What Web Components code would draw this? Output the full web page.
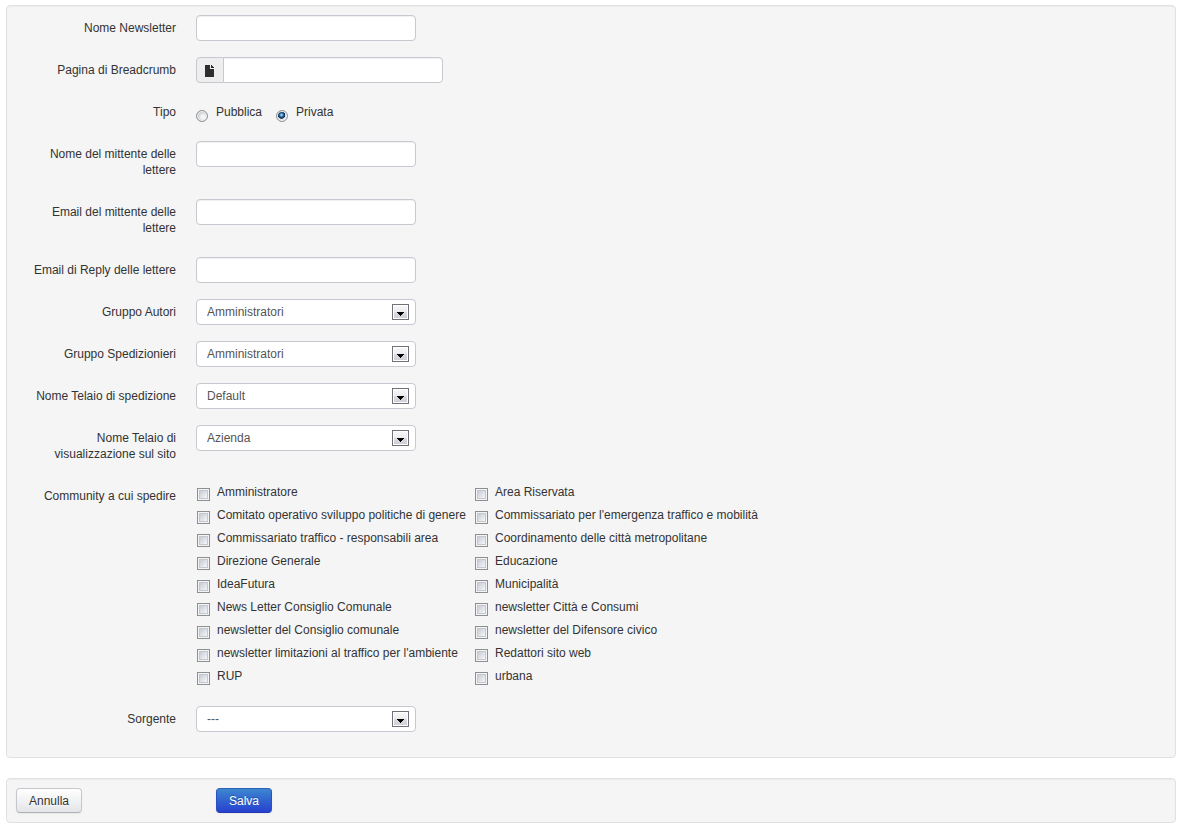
<!DOCTYPE html>
<html lang="it">
<head>
<meta charset="utf-8">
<title>Newsletter</title>
<style>
    body {
        margin: 5px 3px 5px 6px;
        background: #fff;
        color: #333;
        font: 12px/16px "Liberation Sans", Arial, sans-serif;
    }
</style>
</head>
<body>
<newsletter-form></newsletter-form>

<script>
// Row layout and label, shared by every kind of field
const rowStyle = `
    :host {
        display: flex;
        align-items: flex-start;
        gap: 20px;
        margin-bottom: 16px;
    }
    .name {
        box-sizing: border-box;
        flex: 0 0 160px;
        padding: 5px 0;
        text-align: right;
    }
    input[type="text"], select {
        box-sizing: border-box;
        width: 220px;
        height: 26px;
        margin: 0;
        padding: 4px 10px;
        border: 1px solid #c8c9d0;
        border-radius: 4px;
        background: #fff;
        color: #555;
        font: inherit;
        box-shadow: inset 0 1px 1px rgba(0, 0, 0, .06);
    }
`;

class PagePanel extends HTMLElement {
    constructor() {
        super();
        this.attachShadow({ mode: "open" });
        this.shadowRoot.innerHTML = `
            <style>
                :host {
                    display: block;
                    padding: 9px;
                    border: 1px solid #dfe1e5;
                    border-radius: 4px;
                    background: #f5f5f5;
                    box-shadow: inset 0 1px 1px rgba(0, 0, 0, .04);
                }
            </style>
            <slot></slot>
        `;
    }
}
customElements.define("page-panel", PagePanel);

class TextField extends HTMLElement {
    connectedCallback() {
        if (this.shadowRoot) return;
        this.attachShadow({ mode: "open" });
        const icon = this.hasAttribute("icon") ? `
            <span class="addon">
                <svg width="9" height="12" viewBox="0 0 9 12" aria-hidden="true">
                    <path d="M0 0h5v4h4v8H0z M6 0h1v1h1v1h1v1H6z" fill="#2e2e2e"/>
                </svg>
            </span>` : "";
        this.shadowRoot.innerHTML = `
            <style>
                ${rowStyle}
                .control { display: flex; }
                .addon {
                    box-sizing: border-box;
                    display: flex;
                    align-items: center;
                    justify-content: center;
                    width: 28px;
                    height: 26px;
                    margin-right: -1px;
                    padding: 2px 1px 0 0;
                    border: 1px solid #c8c9d0;
                    border-radius: 4px 0 0 4px;
                    background: #eeeeef;
                }
                .addon + input[type="text"] { border-radius: 0 4px 4px 0; }
            </style>
            <label class="name" for="field">${this.getAttribute("label")}</label>
            <div class="control">${icon}<input id="field" type="text"></div>
        `;
    }
}
customElements.define("text-field", TextField);

class SelectField extends HTMLElement {
    connectedCallback() {
        if (this.shadowRoot) return;
        this.attachShadow({ mode: "open" });
        this.shadowRoot.innerHTML = `
            <style>
                ${rowStyle}
                .control { position: relative; }
                select {
                    display: block;
                    appearance: none;
                    box-shadow: none;
                }
                svg {
                    position: absolute;
                    top: 5px;
                    right: 7px;
                    pointer-events: none;
                }
            </style>
            <label class="name" for="field">${this.getAttribute("label")}</label>
            <div class="control">
                <select id="field"><option>${this.getAttribute("value")}</option></select>
                <svg width="17" height="16" viewBox="0 0 17 16" aria-hidden="true">
                    <defs>
                        <linearGradient id="face" x2="0" y2="1">
                            <stop offset="0" stop-color="#f6f6f7"/>
                            <stop offset=".5" stop-color="#ececee"/>
                            <stop offset=".5" stop-color="#dcdde1"/>
                            <stop offset="1" stop-color="#cfd0d6"/>
                        </linearGradient>
                    </defs>
                    <rect x=".5" y=".5" width="16" height="15" fill="#fff" stroke="#707078"/>
                    <rect x="2" y="2" width="13" height="12" fill="url(#face)"/>
                    <path d="M5 8h7v1h-1v1h-1v1h-1v1h-1v-1h-1v-1h-1v-1h-1z" fill="#000"/>
                </svg>
            </div>
        `;
    }
}
customElements.define("select-field", SelectField);

class RadioField extends HTMLElement {
    connectedCallback() {
        if (this.shadowRoot) return;
        this.attachShadow({ mode: "open" });
        const options = this.getAttribute("options").split("|");
        const selected = this.getAttribute("value");
        this.shadowRoot.innerHTML = `
            <style>
                ${rowStyle}
                .control { display: flex; gap: 14px; padding: 5px 0; }
                .control label { display: flex; gap: 8px; height: 16px; }
                input {
                    box-sizing: border-box;
                    appearance: none;
                    width: 12px;
                    height: 12px;
                    margin: 6px 0 0;
                    border: 1px solid #8f9197;
                    border-radius: 50%;
                    background: radial-gradient(circle at 60% 60%, #f4f5f6 20%, #c9ccd1 60%);
                    box-shadow: inset 0 0 0 1px #f4f4f4;
                }
                input:checked {
                    background: radial-gradient(circle at 45% 40%, #8fd0f0 0 8%, #2c6ca4 22%, #10294f 42%, #dfe3e8 50%);
                }
            </style>
            <span class="name" id="name">${this.getAttribute("label")}</span>
            <div class="control" role="radiogroup" aria-labelledby="name">
                ${options.map(o => `<label><input type="radio" name="choice" ${o === selected ? "checked" : ""}>${o}</label>`).join("")}
            </div>
        `;
    }
}
customElements.define("radio-field", RadioField);

class CheckField extends HTMLElement {
    connectedCallback() {
        if (this.shadowRoot) return;
        this.attachShadow({ mode: "open" });
        const options = this.getAttribute("options").split("|");
        this.shadowRoot.innerHTML = `
            <style>
                ${rowStyle}
                .control {
                    display: grid;
                    grid-template-columns: repeat(2, 278px);
                    grid-auto-rows: 23px;
                    padding-left: 1px;
                }
                .control label {
                    display: flex;
                    align-items: flex-start;
                    gap: 7px;
                    padding-top: 1px;
                    white-space: nowrap;
                }
                input {
                    box-sizing: border-box;
                    flex: none;
                    appearance: none;
                    width: 13px;
                    height: 13px;
                    margin: 4px 0 0;
                    padding: 2px;
                    border: 1px solid #8e8f8f;
                    background:
                        linear-gradient(135deg, #c6cbd6, #f6f7f8) content-box,
                        #f6f6f6;
                    box-shadow: inset 0 0 0 1px #f4f4f4, inset 0 0 0 2px #c3c7cf;
                }
                input:checked { background: #2c6ca4; }
            </style>
            <span class="name" id="name">${this.getAttribute("label")}</span>
            <div class="control" role="group" aria-labelledby="name">
                ${options.map(o => `<label><input type="checkbox">${o}</label>`).join("")}
            </div>
        `;
    }
}
customElements.define("check-field", CheckField);

class ActionButton extends HTMLElement {
    constructor() {
        super();
        this.attachShadow({ mode: "open" });
        this.shadowRoot.innerHTML = `
            <style>
                :host { display: block; }
                button {
                    display: block;
                    height: 25px;
                    margin: 0;
                    padding: 0 12px;
                    border: 1px solid #c6c7cd;
                    border-bottom-color: #b0b1b8;
                    border-radius: 4px;
                    background: linear-gradient(#fff, #e4e5e8);
                    color: #333;
                    font: inherit;
                    text-shadow: 0 1px 1px rgba(255, 255, 255, .75);
                    box-shadow: 0 1px 2px rgba(0, 0, 0, .05);
                }
                :host([primary]) button {
                    border-color: #2a62b8 #2a4fc0 #2238b0;
                    background: linear-gradient(#3c86d0, #2741cf);
                    color: #fff;
                    text-shadow: 0 -1px 0 rgba(0, 0, 0, .25);
                }
            </style>
            <button type="button"><slot></slot></button>
        `;
    }
}
customElements.define("action-button", ActionButton);

const formTemplate = document.createElement("template");

formTemplate.innerHTML = `
<style>
    :host {
        display: flex;
        flex-direction: column;
        gap: 20px;
    }
    .actions {
        display: grid;
        grid-template-columns: 180px 1fr;
        gap: 20px;
        justify-items: start;
    }
</style>

<page-panel>
    <text-field label="Nome Newsletter"></text-field>
    <text-field label="Pagina di Breadcrumb" icon></text-field>
    <radio-field label="Tipo" options="Pubblica|Privata" value="Privata"></radio-field>
    <text-field label="Nome del mittente delle lettere"></text-field>
    <text-field label="Email del mittente delle lettere"></text-field>
    <text-field label="Email di Reply delle lettere"></text-field>
    <select-field label="Gruppo Autori" value="Amministratori"></select-field>
    <select-field label="Gruppo Spedizionieri" value="Amministratori"></select-field>
    <select-field label="Nome Telaio di spedizione" value="Default"></select-field>
    <select-field label="Nome Telaio di visualizzazione sul sito" value="Azienda"></select-field>
    <check-field label="Community a cui spedire" options="Amministratore|Area Riservata|Comitato operativo sviluppo politiche di genere|Commissariato per l'emergenza traffico e mobilità|Commissariato traffico - responsabili area|Coordinamento delle città metropolitane|Direzione Generale|Educazione|IdeaFutura|Municipalità|News Letter Consiglio Comunale|newsletter Città e Consumi|newsletter del Consiglio comunale|newsletter del Difensore civico|newsletter limitazioni al traffico per l'ambiente|Redattori sito web|RUP|urbana"></check-field>
    <select-field label="Sorgente" value="---"></select-field>
</page-panel>
<page-panel>
    <div class="actions">
        <action-button>Annulla</action-button>
        <action-button primary>Salva</action-button>
    </div>
</page-panel>
`;

class NewsletterForm extends HTMLElement {
    constructor() {
        super();
        this.attachShadow({ mode: "open" });
        this.shadowRoot.appendChild(formTemplate.content.cloneNode(true));
    }
}
customElements.define("newsletter-form", NewsletterForm);
</script>
</body>
</html>
